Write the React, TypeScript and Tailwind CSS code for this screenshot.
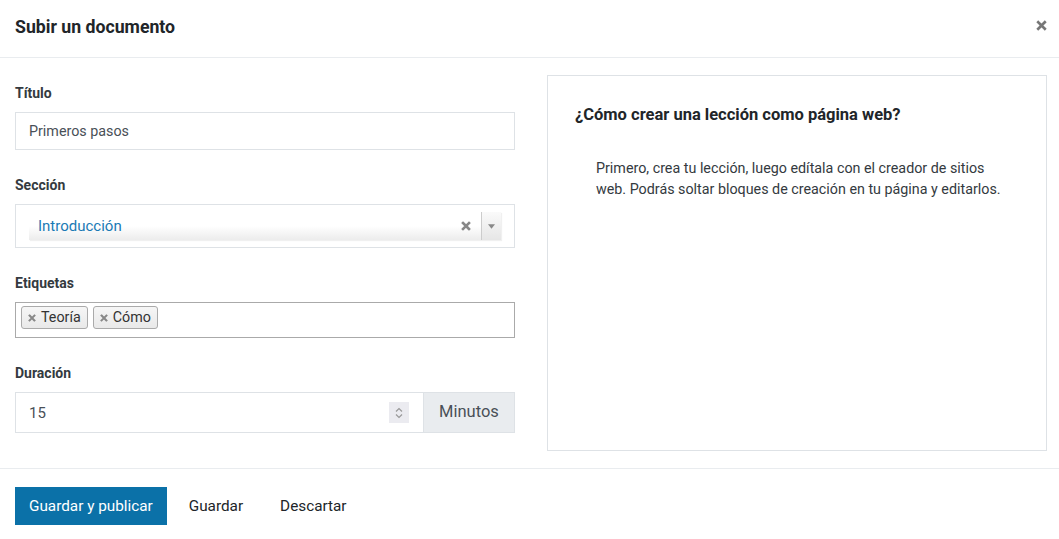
import React from "react";

function SmallX({ className = "", w = 2.4 }: { className?: string; w?: number }) {
  return (
    <svg viewBox="0 0 10 10" className={className} aria-hidden>
      <path d="M2 2 L8 8 M8 2 L2 8" stroke="currentColor" strokeWidth={w} strokeLinecap="square" />
    </svg>
  );
}

export default function App() {
  return (
    <div className="w-[1059px] h-[539px] bg-white text-[#212529] overflow-hidden" style={{ fontFamily: "Roboto, 'Noto Sans', sans-serif" }}>
      {/* Header */}
      <div className="h-[58px] border-b border-[#e9ecef] flex items-center justify-between pl-[15px] pr-[12px]">
        <h1 className="text-[17.7px] font-bold text-[#212529] leading-none -mt-[1px]">Subir un documento</h1>
        <SmallX className="w-[11px] h-[11px] text-[#777] -mt-[7px]" />
      </div>

      {/* Body */}
      <div className="flex gap-[32px] pl-[15px] pr-[12px] pt-[17px] pb-[17px] border-b border-[#e9ecef]">
        <div className="w-[500px] shrink-0 flex flex-col">
          <label className="mt-[8px] h-[21px] leading-[21px] text-[14px] font-bold text-[#343a40]">Título</label>
          <div className="mt-[8px] h-[38px] border border-[#dee2e6] flex items-center pl-[13px] pt-[1px] text-[14.3px] text-[#495057]">Primeros pasos</div>

          <label className="mt-[25px] h-[21px] leading-[21px] text-[14px] font-bold text-[#343a40]">Sección</label>
          <div className="mt-[8px] h-[44px] border border-[#dee2e6] px-[13px] py-[7px]">
            <div className="h-[28px] flex items-center bg-gradient-to-b from-white via-white to-[#ececec] shadow-[1px_1px_1px_rgba(0,0,0,0.06)]">
              <span className="pl-[9px] flex-1 text-[15px] text-[#1a7ab5]">Introducción</span>
              <SmallX className="w-[10px] h-[10px] text-[#888] mr-[10px]" w={2.6} />
              <div className="w-[20px] h-[28px] border-l border-[#ccc] bg-gradient-to-b from-[#fafafa] to-[#e6e6e6] flex items-center justify-center">
                <svg viewBox="0 0 8 5" className="w-[7px] h-[5px]"><path d="M0 0 L8 0 L4 5 Z" fill="#888" /></svg>
              </div>
            </div>
          </div>

          <label className="mt-[25px] h-[21px] leading-[21px] text-[14px] font-bold text-[#343a40]">Etiquetas</label>
          <div className="mt-[8px] h-[36px] border border-[#aaa] flex items-start gap-[5px] px-[5px] pt-[3px]">
            {["Teoría", "Cómo"].map((t) => (
              <div key={t} className="h-[23px] flex items-center gap-[5px] pl-[6px] pr-[6px] rounded-[3px] border border-[#aaa] bg-gradient-to-b from-[#f6f6f6] to-[#e9e9e9] text-[14.3px] text-[#333]">
                <SmallX className="w-[8px] h-[8px] text-[#888]" w={2.6} />
                <span>{t}</span>
              </div>
            ))}
          </div>

          <label className="mt-[25px] h-[21px] leading-[21px] text-[14px] font-bold text-[#343a40]">Duración</label>
          <div className="mt-[8px] h-[41px] flex">
            <div className="flex-1 border border-[#dee2e6] flex items-center pl-[13px] pr-[14px] text-[15px] text-[#495057]">
              <span className="flex-1 pt-[1px]">15</span>
              <div className="w-[20px] h-[21px] bg-[#ebebf0] flex flex-col items-center justify-center gap-[2px]">
                <svg viewBox="0 0 8 5" className="w-[8px] h-[5px]"><path d="M1 4.5 L4 1.5 L7 4.5" stroke="#999" strokeWidth="1.2" fill="none" /></svg>
                <svg viewBox="0 0 8 5" className="w-[8px] h-[5px]"><path d="M1 0.5 L4 3.5 L7 0.5" stroke="#999" strokeWidth="1.2" fill="none" /></svg>
              </div>
            </div>
            <div className="w-[91px] border border-l-0 border-[#dee2e6] bg-[#e9ecef] flex items-center justify-center text-[16.5px] text-[#495057]">Minutos</div>
          </div>
        </div>

        <div className="w-[500px] shrink-0 h-[376px] border border-[#dee2e6] pl-[27px] pr-[20px] pt-[27px]">
          <h2 className="text-[16.5px] font-bold text-[#212529] leading-[24px]">¿Cómo crear una lección como página web?</h2>
          <p className="mt-[31px] pl-[21px] pr-[20px] text-[14.3px] leading-[21px] text-[#343a40]">
            Primero, crea tu lección, luego edítala con el creador de sitios web. Podrás soltar bloques de creación en tu página y editarlos.
          </p>
        </div>
      </div>

      {/* Footer */}
      <div className="flex items-center px-[15px] pt-[18px]">
        <button className="h-[38px] px-[14px] bg-[#0b71a8] text-white text-[15.3px]">Guardar y publicar</button>
        <button className="h-[38px] ml-[22px] text-[15.3px] text-[#212529]">Guardar</button>
        <button className="h-[38px] ml-[37px] text-[15.3px] text-[#212529]">Descartar</button>
      </div>
    </div>
  );
}
